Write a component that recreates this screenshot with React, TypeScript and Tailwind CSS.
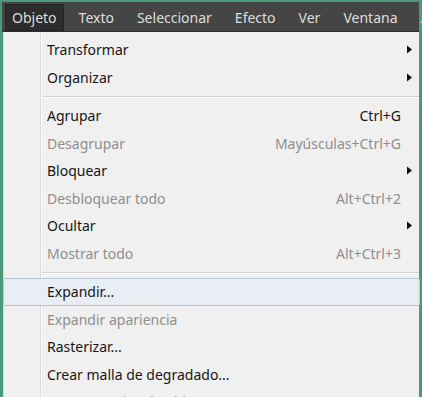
import React from "react";

type Item =
  | { kind: "sep" }
  | { kind: "item"; label: string; shortcut?: string; sub?: boolean; disabled?: boolean; active?: boolean };

const items: Item[] = [
  { kind: "item", label: "Transformar", sub: true },
  { kind: "item", label: "Organizar", sub: true },
  { kind: "sep" },
  { kind: "item", label: "Agrupar", shortcut: "Ctrl+G" },
  { kind: "item", label: "Desagrupar", shortcut: "Mayúsculas+Ctrl+G", disabled: true },
  { kind: "item", label: "Bloquear", sub: true },
  { kind: "item", label: "Desbloquear todo", shortcut: "Alt+Ctrl+2", disabled: true },
  { kind: "item", label: "Ocultar", sub: true },
  { kind: "item", label: "Mostrar todo", shortcut: "Alt+Ctrl+3", disabled: true },
  { kind: "sep" },
  { kind: "item", label: "Expandir...", active: true },
  { kind: "item", label: "Expandir apariencia", disabled: true },
  { kind: "item", label: "Rasterizar..." },
  { kind: "item", label: "Crear malla de degradado..." },
  { kind: "item", label: "Crear mosaico de objetos...", disabled: true },
];

const menus = ["Texto", "Seleccionar", "Efecto", "Ver", "Ventana"];

const Arrow = () => (
  <svg width="7" height="9" viewBox="0 0 7 9" className="shrink-0">
    <path d="M1 0.5 L6 4.5 L1 8.5 Z" fill="#111" />
  </svg>
);

const Row = ({ item }: { item: Item }) => {
  if (item.kind === "sep") {
    return (
      <div className="h-[11px] flex items-center pl-[38px]">
        <div className="w-full border-t border-[#d2d2d2] border-b border-b-white" />
      </div>
    );
  }
  return (
    <div
      className={
        "h-[27.5px] flex items-center pl-[43px] pr-[6px] " +
        (item.active
          ? "bg-[#e9eef5] border border-[#b9c6d6] rounded-[2px] -ml-[1px] -mr-[1px]"
          : "")
      }
    >
      <span className={"flex-1 " + (item.disabled ? "text-[#8e8e8e]" : "text-[#161616]")}>
        {item.label}
      </span>
      {item.shortcut && (
        <span className={"mr-[12px] " + (item.disabled ? "text-[#8e8e8e]" : "text-[#161616]")}>
          {item.shortcut}
        </span>
      )}
      {item.sub && <Arrow />}
    </div>
  );
};

export default function App() {
  return (
    <div
      className="w-[422px] h-[397px] overflow-hidden bg-[#4c9a7c] pt-[2px] pl-[2px] pr-[3px]"
      style={{ fontFamily: '"Noto Sans", "Open Sans", sans-serif' }}
    >
      <div className="h-[30px] bg-[#454545] flex items-stretch text-[14px] text-[#dedede] pl-[3px] pt-[2px] border-b border-[#2f2f2f]">
        <div className="bg-[#2c2c2c] border border-[#222] px-[6px] flex items-center w-[66px]">
          Objeto
        </div>
        <div className="flex items-center gap-[23px] pl-[15px]">
          {menus.map((m) => (
            <span key={m}>{m}</span>
          ))}
          <span>A</span>
        </div>
      </div>
      <div className="relative bg-[#f0f0f0] h-full ml-[1px] border-l border-[#d8d8d8] pt-[4px] text-[14px]">
        <div className="absolute top-0 bottom-0 left-[36px] w-[2px] border-l border-[#dadada] border-r border-r-white" />
        <div className="relative">
          {items.map((it, i) => (
            <Row key={i} item={it} />
          ))}
        </div>
      </div>
    </div>
  );
}
